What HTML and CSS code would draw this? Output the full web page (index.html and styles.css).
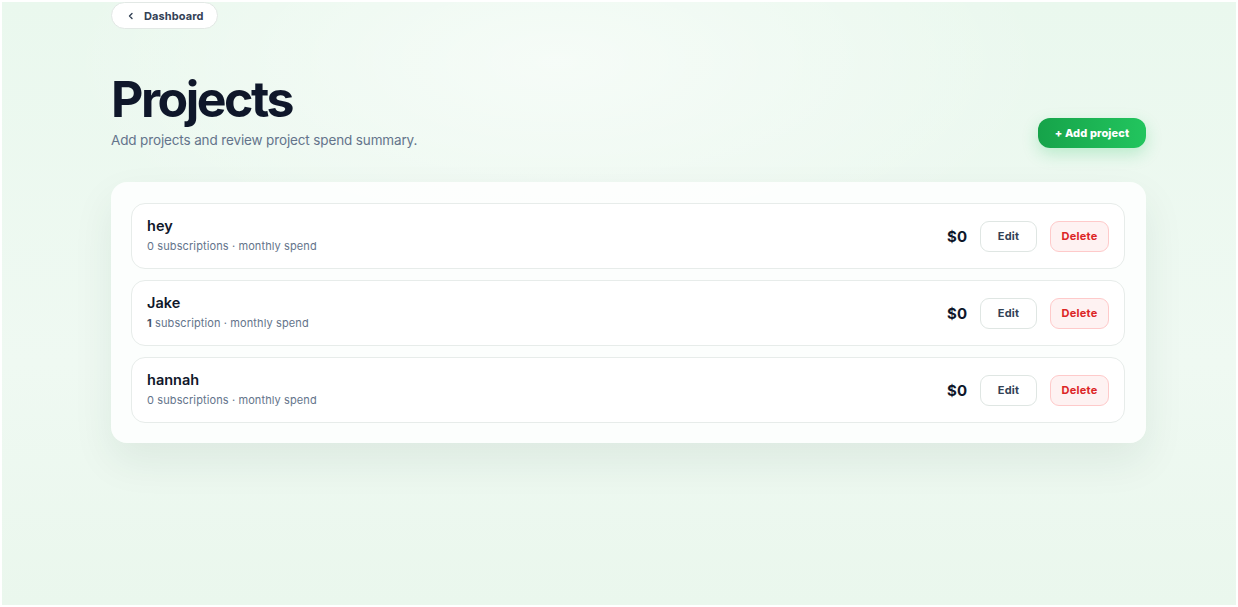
FILE: index.html
```html
<!DOCTYPE html>
<html lang="en">
<head>
  <meta charset="UTF-8" />
  <meta name="viewport" content="width=device-width, initial-scale=1.0">
  <title>Projects</title>
  <link rel="stylesheet" href="styles.css">
</head>
<body>
  <div class="page">
    <div class="container">
      <!-- back link -->
      <a class="back-btn" href="#">
        <svg width="8" height="8" viewBox="0 0 8 8" fill="none">
          <path d="M5 1.5L2.5 4L5 6.5" stroke="#334155" stroke-width="1.4" stroke-linecap="round" stroke-linejoin="round"/>
        </svg>
        Dashboard
      </a>

      <div class="header">
        <div>
          <h1>Projects</h1>
          <p class="subtitle">Add projects and review project spend summary.</p>
        </div>
        <button class="add-btn">+ Add project</button>
      </div>

      <!-- project list -->
      <div class="card">
        <div class="project-row">
          <div class="project-info">
            <div class="project-name">hey</div>
            <div class="project-meta">0 subscriptions · monthly spend</div>
          </div>
          <div class="project-actions">
            <span class="amount">$0</span>
            <button class="edit-btn">Edit</button>
            <button class="delete-btn">Delete</button>
          </div>
        </div>
        <div class="project-row">
          <div class="project-info">
            <div class="project-name">Jake</div>
            <div class="project-meta"><b>1</b> subscription · monthly spend</div>
          </div>
          <div class="project-actions">
            <span class="amount">$0</span>
            <button class="edit-btn">Edit</button>
            <button class="delete-btn">Delete</button>
          </div>
        </div>
        <div class="project-row">
          <div class="project-info">
            <div class="project-name">hannah</div>
            <div class="project-meta">0 subscriptions · monthly spend</div>
          </div>
          <div class="project-actions">
            <span class="amount">$0</span>
            <button class="edit-btn">Edit</button>
            <button class="delete-btn">Delete</button>
          </div>
        </div>
      </div>
    </div>
  </div>
</body>
</html>
```

FILE: styles.css
```css
* {
  box-sizing: border-box;
}

html {
  background: #ffffff;
}

body {
  margin: 0;
  padding: 2px;
  font-family: Inter, "Noto Sans", sans-serif;
  color: #0f172a;
}

.page {
  height: calc(100vh - 4px);
  overflow: hidden;
  background:
    radial-gradient(ellipse 40% 35% at 45% 10%, rgba(255, 255, 255, 0.55), rgba(255, 255, 255, 0)),
    linear-gradient(180deg, #eaf8ee 0%, #eff9f2 60%, #eaf7ed 100%);
  padding-left: 109px;
}

.container {
  width: 1035px;
}

.back-btn {
  display: inline-flex;
  align-items: center;
  gap: 9px;
  height: 27px;
  padding: 0 13px 0 15px;
  border: 1px solid #e2e8e5;
  border-radius: 14px;
  background: #ffffff;
  font-size: 11px;
  font-weight: 700;
  letter-spacing: 0.01em;
  color: #334155;
  text-decoration: none;
}

.header {
  display: flex;
  justify-content: space-between;
  align-items: flex-end;
  margin-top: 40px;
}

h1 {
  margin: 0;
  font-size: 50px;
  font-weight: 700;
  letter-spacing: -0.05em;
  line-height: 60px;
  color: #0f172a;
}

.subtitle {
  margin: 0;
  padding-top: 1px;
  font-size: 13.5px;
  font-weight: 400;
  letter-spacing: -0.01em;
  color: #64748b;
  line-height: 20px;
}

.add-btn {
  margin-bottom: 2px;
  height: 30px;
  width: 108px;
  border: none;
  border-radius: 12px;
  background: linear-gradient(90deg, #16a34a, #22c55e);
  color: #ffffff;
  font-family: inherit;
  font-size: 11px;
  font-weight: 800;
  letter-spacing: 0.01em;
  box-shadow: 0 6px 16px rgba(34, 197, 94, 0.25);
  cursor: pointer;
}

.card {
  margin-top: 32px;
  padding: 21px 21px 20px 20px;
  border-radius: 16px;
  background: rgba(255, 255, 255, 0.82);
  box-shadow: 0 18px 40px rgba(30, 70, 45, 0.08);
  display: flex;
  flex-direction: column;
  gap: 11px;
}

.project-row {
  display: flex;
  justify-content: space-between;
  align-items: center;
  height: 66px;
  padding: 0 15px;
  border: 1px solid #e7ecea;
  border-radius: 14px;
  background: #ffffff;
}

.project-info {
  padding-bottom: 2px;
}

.project-name {
  font-size: 14.5px;
  font-weight: 600;
  color: #0f172a;
  line-height: 18px;
}

.project-meta {
  margin-top: 4px;
  font-size: 11px;
  color: #64748b;
  line-height: 14px;
  letter-spacing: 0.01em;
}

.project-meta b {
  font-weight: 700;
  color: #475569;
}

.project-actions {
  display: flex;
  align-items: center;
  gap: 13px;
}

.amount {
  font-size: 15px;
  font-weight: 700;
  color: #0f172a;
}

.edit-btn,
.delete-btn {
  height: 31px;
  border-radius: 9px;
  font-family: inherit;
  font-size: 11px;
  font-weight: 700;
  letter-spacing: 0.02em;
  cursor: pointer;
}

.edit-btn {
  width: 57px;
  border: 1px solid #dfe6e3;
  background: #ffffff;
  color: #334155;
}

.delete-btn {
  width: 59px;
  border: 1px solid #fecaca;
  background: #fef2f2;
  color: #dc2626;
}
```
